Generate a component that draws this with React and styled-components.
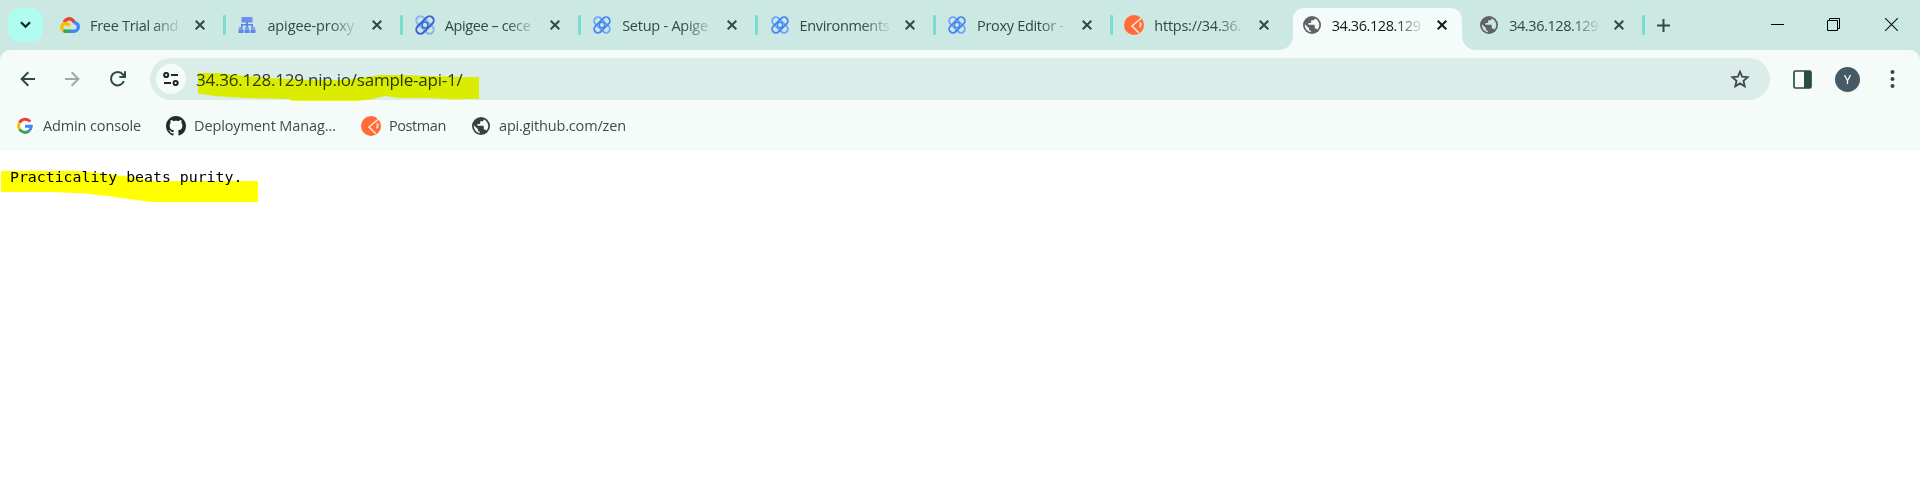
import React from "react";
import styled, { createGlobalStyle } from "styled-components";

const Global = createGlobalStyle`
  * { box-sizing: border-box; }
  body { margin: 0; background: #fff; font-family: "Open Sans", "Noto Sans", sans-serif; }
`;

const Window = styled.div`
  height: 494px;
  overflow: hidden;
  background: #fff;
`;

const TabStrip = styled.header`
  display: flex;
  height: 50px;
  padding-left: 8px;
  background: #cce8e2;
`;

const SearchTabs = styled.div`
  display: flex;
  align-items: center;
  justify-content: center;
  width: 35px;
  height: 34px;
  margin: 8px 4px 0 0;
  border-radius: 12px;
  background: #affcf0;
`;

const Tab = styled.div`
  position: relative;
  display: flex;
  align-items: center;
  flex: none;
  width: 177.4px;
  height: 50px;
  padding-left: 13px;
  color: ${(p) => (p.$active ? "#111b19" : "#2e4a45")};
`;

const ActiveShape = styled.svg`
  position: absolute;
  left: -11px;
  top: 0;
`;

const IconSlot = styled.span`
  position: relative;
  display: flex;
  align-items: center;
  justify-content: center;
  flex: none;
  width: 20px;
  height: 20px;
`;

const TabTitle = styled.span`
  position: relative;
  flex: none;
  width: 91px;
  margin-left: 10px;
  padding-top: 1px;
  overflow: hidden;
  white-space: nowrap;
  font-size: 14.5px;
  line-height: 24px;
  letter-spacing: ${(p) => p.$track}px;
  mask-image: linear-gradient(to right, #000 62px, transparent 93px);
`;

const CloseSlot = styled.span`
  position: relative;
  display: flex;
  flex: none;
  margin-left: 14px;
`;

const Divider = styled.span`
  flex: none;
  width: 3px;
  height: 20px;
  margin: 0 -3px 0 18px;
  border-radius: 1px;
  background: ${(p) => (p.$hidden ? "transparent" : "#7addd0")};
`;

const NewTab = styled.div`
  display: flex;
  align-items: center;
  margin-left: 13px;
`;

const WindowControls = styled.div`
  display: flex;
  align-items: center;
  gap: 43px;
  height: 49px;
  margin-left: auto;
  padding-right: 22px;
`;

const CloseWindow = styled.svg`
  margin-left: 2px;
`;

const Chrome = styled.div`
  background: #cce8e2;
`;

const Panel = styled.div`
  height: 101px;
  padding-top: 8px;
  border-radius: 10px 10px 0 0;
  background: #f5fbf9;
`;

const Toolbar = styled.div`
  display: flex;
  align-items: center;
  height: 42px;
  padding: 0 15px 0 18px;
`;

const NavIcons = styled.div`
  display: flex;
  flex: none;
  gap: 25px;
  width: 132px;
`;

const Omnibox = styled.div`
  position: relative;
  display: flex;
  align-items: center;
  flex: none;
  width: 1620px;
  height: 42px;
  padding: 0 20px 0 6px;
  border-radius: 21px;
  background: #daede8;
`;

const SiteInfo = styled.div`
  display: flex;
  align-items: center;
  justify-content: center;
  width: 30px;
  height: 30px;
  border-radius: 50%;
  background: #f5fbf9;
`;

const Url = styled.span`
  margin: 0 auto 0 10px;
  padding-top: 1px;
  font-size: 17px;
  line-height: 26px;
  letter-spacing: -0.22px;
  color: #2c3936;
  white-space: nowrap;
`;

const UrlMarker = styled.svg`
  position: absolute;
  left: 48px;
  top: 15px;
  mix-blend-mode: multiply;
`;

const Actions = styled.div`
  display: flex;
  align-items: center;
  flex: none;
  margin-left: 20px;
`;

const Avatar = styled.span`
  width: 25px;
  height: 25px;
  margin: 0 20px;
  border-radius: 50%;
  background: #455a64;
  color: #fff;
  font: 12.5px/25px Roboto, sans-serif;
  text-align: center;
`;

const Bookmarks = styled.nav`
  display: flex;
  align-items: center;
  height: 51px;
  padding-left: 15px;
`;

const Bookmark = styled.div`
  display: flex;
  align-items: center;
  gap: 8px;
  width: ${(p) => p.$width}px;
  font-size: 14.5px;
  line-height: 24px;
  letter-spacing: ${(p) => p.$track}px;
  color: #414c49;
  white-space: nowrap;
`;

const Page = styled.main`
  position: relative;
  padding: 15px 10px;
`;

const Response = styled.pre`
  margin: 0;
  font: 14.85px/22px "DejaVu Sans Mono", monospace;
  color: #000;
`;

const PageMarker = styled.svg`
  position: absolute;
  left: 1px;
  top: 20px;
  mix-blend-mode: multiply;
`;

const CloudIcon = () => (
  <svg width="20" height="16" viewBox="0 0 20 16" fill="none" strokeWidth="3.4">
    <path d="M4.2 5.2C5.5 2 9.2.8 12 2.6c1.3.8 2 1.8 2.3 3.2" stroke="#ea4335" />
    <path d="M13.8 5.6c3.1.3 4.5 2.3 4.5 4.3 0 2.4-1.7 4.300-4.200 4.300H10" stroke="#4285f4" />
    <path d="M10.300 14.200H6c-1 0-1.700-.2-2.500-.7" stroke="#34a853" />
    <path d="M3.400 13.400C.8 11.500 1.300 6.700 5.600 6.500c1.800 0 2.800.8 3.800 2.300" stroke="#fbbc04" />
  </svg>
);

const ProxyIcon = () => (
  <svg width="18" height="17" viewBox="0 0 18 17">
    <path d="M3.500 0h11v5.500h-11z" fill="#6c8fee" />
    <path d="M8 5h2v7H8zM3 7h12v1.600H3zM3 8h1.600v4H3zM13.400 8H15v4h-1.600z" fill="#5c84e8" />
    <path d="M1 10h4v2.500H1zM7 10h4v2.500H7zM13 10h4v2.500h-4z" fill="#7d9cf2" />
    <path d="M.5 12.500h5V16h-5zM6.500 12.500h5V16h-5zM12.500 12.500h5V16h-5z" fill="#5f86ea" />
  </svg>
);

const ApigeeIcon = ({ size = 18, dark = "#4285f4", light = "#6ea4f5" }) => (
  <svg width={size} height={size} viewBox="0 0 20 20" fill="none" strokeWidth="2">
    <rect x="-.6" y="5.800" width="21.200" height="8.400" rx="4.200" transform="rotate(45 10 10)" stroke={light} />
    <rect x="-.6" y="5.800" width="21.200" height="8.400" rx="4.200" transform="rotate(-45 10 10)" stroke={dark} />
    <circle cx="10" cy="10" r="3" stroke={dark} strokeWidth="1.600" />
  </svg>
);

const PostmanIcon = () => (
  <svg width="20" height="20" viewBox="0 0 20 20" fill="none">
    <circle cx="10" cy="10" r="10" fill="#ff6c37" />
    <path d="M17.200 3.200 8 11l6.800 6.800" stroke="#ffe9e0" strokeWidth="1.500" />
    <path d="M16.200 7.200c1.600 1.500 1.400 3.800-.4 5.200z" stroke="#ffe9e0" strokeWidth="1" />
  </svg>
);

const GlobeIcon = ({ color = "#5f6368", bg = "#cce8e2" }) => (
  <svg width="18" height="18" viewBox="0 0 18 18">
    <circle cx="9" cy="9" r="9" fill={color} />
    <path
      d="M1.900 8.200 6 12.200v.7c0 1.100.8 1.900 1.900 1.900v1.400A7.200 7.200 0 0 1 1.900 8.200zM11.800 2.400A7.200 7.200 0 0 1 14.400 13.800c-.3-.8-1-1.300-1.800-1.300h-.8V9.800c0-.6-.4-1-1-1H5.400V7h1.800c.6 0 1-.4 1-1V4.300h1.700c1.100 0 1.900-.8 1.900-1.900z"
      fill={bg}
    />
  </svg>
);

const GoogleIcon = () => (
  <svg width="20" height="20" viewBox="0 0 20 20" fill="none" strokeWidth="3">
    <circle cx="10" cy="10" r="10" fill="#fff" />
    <path d="M15.200 5.600A6.400 6.400 0 0 0 4.500 6.700" stroke="#ea4335" />
    <path d="M4.500 6.700a6.400 6.400 0 0 0 0 6.600" stroke="#fbbc04" />
    <path d="M4.500 13.300a6.400 6.400 0 0 0 9.600 1.600" stroke="#34a853" />
    <path d="M14.100 14.900c1.500-1.200 2.200-2.700 2.200-4.600H10" stroke="#4285f4" />
  </svg>
);

const GithubIcon = () => (
  <svg width="20" height="20" viewBox="0 0 16 16" fill="#24292f">
    <path d="M8 0C3.580 0 0 3.580 0 8c0 3.540 2.290 6.530 5.470 7.590.4.070.55-.17.55-.38 0-.19-.01-.82-.01-1.490-2.010.37-2.530-.49-2.690-.94-.09-.23-.48-.94-.82-1.130-.28-.15-.68-.52-.01-.53.63-.01 1.080.58 1.230.82.72 1.210 1.870.87 2.330.66.07-.52.28-.87.51-1.070-1.780-.2-3.640-.89-3.640-3.950 0-.87.31-1.590.82-2.150-.08-.2-.36-1.020.08-2.120 0 0 .67-.21 2.200.82.64-.18 1.320-.27 2-.27s1.360.09 2 .27c1.530-1.040 2.200-.82 2.200-.82.44 1.100.16 1.920.08 2.120.51.56.82 1.270.82 2.150 0 3.070-1.870 3.750-3.650 3.950.29.25.54.73.54 1.480 0 1.070-.01 1.930-.01 2.200 0 .21.15.46.55.38A8.010 8.010 0 0 0 16 8c0-4.420-3.580-8-8-8z" />
  </svg>
);

const CloseIcon = () => (
  <svg width="10" height="10" viewBox="0 0 10 10" stroke="currentColor" strokeWidth="2">
    <path d="M.7.7l8.600 8.600M9.300.7L.7 9.300" />
  </svg>
);

const tabs = [
  { title: "Free Trial and", track: -0.3, icon: <CloudIcon /> },
  { title: "apigee-proxy", track: -0.1, icon: <ProxyIcon /> },
  { title: "Apigee – cece", track: -0.4, icon: <ApigeeIcon size={20} dark="#3367d6" light="#8fb0ee" /> },
  { title: "Setup - Apige", track: -0.25, icon: <ApigeeIcon /> },
  { title: "Environments", track: -0.35, icon: <ApigeeIcon /> },
  { title: "Proxy Editor -", track: -0.3, icon: <ApigeeIcon /> },
  { title: "https://34.36.", track: -0.25, icon: <PostmanIcon />, noDivider: true },
  { title: "34.36.128.129", track: -0.42, icon: <GlobeIcon bg="#f5fbf9" />, active: true, noDivider: true },
  { title: "34.36.128.129", track: -0.42, icon: <GlobeIcon /> },
];

const bookmarks = [
  { label: "Admin console", width: 151, track: -0.13, icon: <GoogleIcon /> },
  { label: "Deployment Manag...", width: 195, track: -0.11, icon: <GithubIcon /> },
  { label: "Postman", width: 110, track: -0.42, icon: <PostmanIcon /> },
  { label: "api.github.com/zen", width: 170, track: -0.16, icon: <GlobeIcon color="#3c4043" bg="#f5fbf9" /> },
];

export default function App() {
  return (
    <Window>
      <Global />
      <TabStrip>
        <SearchTabs>
          <svg width="11" height="8" viewBox="0 0 11 8" fill="none" stroke="#12201d" strokeWidth="2.200">
            <path d="M1 1.200l4.500 4.500L10 1.200" />
          </svg>
        </SearchTabs>
        {tabs.map((t, i) => (
          <Tab key={i} $active={t.active}>
            {t.active && (
              <ActiveShape width="201" height="50" viewBox="0 0 201 50" fill="#f5fbf9">
                <path d="M0 50c9 0 15-6 15-15V20C15 12 20 8 27 8h145c7 0 12 4 12 12v15c0 9 6 15 15 15z" />
              </ActiveShape>
            )}
            <IconSlot>{t.icon}</IconSlot>
            <TabTitle $track={t.track}>{t.title}</TabTitle>
            <CloseSlot>
              <CloseIcon />
            </CloseSlot>
            <Divider $hidden={t.noDivider} />
          </Tab>
        ))}
        <NewTab>
          <svg width="13" height="13" viewBox="0 0 13 13" stroke="#2e4a45" strokeWidth="2">
            <path d="M6.500 0v13M0 6.500h13" />
          </svg>
        </NewTab>
        <WindowControls>
          <svg width="13" height="13" viewBox="0 0 13 13" stroke="#000">
            <path d="M0 6.500h13" />
          </svg>
          <svg width="13" height="13" viewBox="0 0 13 13" fill="none" stroke="#000">
            <path d="M.5 2.500h10v10H.5zM2.500 2V.5h10v10H11" />
          </svg>
          <CloseWindow width="13" height="13" viewBox="0 0 13 13" stroke="#111" strokeWidth="1.100">
            <path d="M0 0l13 13M13 0L0 13" />
          </CloseWindow>
        </WindowControls>
      </TabStrip>
      <Chrome>
        <Panel>
          <Toolbar>
            <NavIcons>
              <svg width="20" height="20" viewBox="0 0 20 20" fill="none" stroke="#2e4a45" strokeWidth="2">
                <path d="M17 10H4M10.300 3.300L3.600 10l6.700 6.700" />
              </svg>
              <svg width="20" height="20" viewBox="0 0 20 20" fill="none" stroke="#a0a8a6" strokeWidth="2">
                <path d="M2 10h13M8.700 3.300l6.700 6.700-6.700 6.700" />
              </svg>
              <svg width="20" height="20" viewBox="0 0 20 20" fill="none" stroke="#2e4a45" strokeWidth="2">
                <path d="M15.900 12.200A6.700 6.700 0 1 1 14.900 5.500l1.500 1.800M17 2.200V8h-5.700" />
              </svg>
            </NavIcons>
            <Omnibox>
              <SiteInfo>
                <svg width="16" height="14" viewBox="0 0 16 14" fill="none" stroke="#1c2a27" strokeWidth="2">
                  <circle cx="3.200" cy="3" r="2.100" />
                  <path d="M8 3h7M1 11h7" />
                  <circle cx="12.600" cy="11" r="2.100" />
                </svg>
              </SiteInfo>
              <Url>34.36.128.129.nip.io/sample-api-1/</Url>
              <UrlMarker width="281" height="28" viewBox="0 0 281 28" fill="#ff0">
                <path d="M0 0h20l27 3 25 2 40 2h35l15-2 20-3h20l30 1 35 1h14v22h-14l-10 .5-25-1.500h-30l-15-2-15 3.500-13 1.500H95l-5-2-43-1-30-2-17-2.500z" />
              </UrlMarker>
              <svg width="20" height="20" viewBox="0 0 20 20" fill="none" stroke="#414a48" strokeWidth="1.800">
                <path d="M10 2.700l2.100 5 5.600.5-4.200 3.700 1.200 5.400-4.700-2.900-4.700 2.900 1.200-5.400L2.300 8.200l5.600-.5z" />
              </svg>
            </Omnibox>
            <Actions>
              <svg width="25" height="19" viewBox="0 0 25 19">
                <rect x="4" y="1" width="17" height="17" rx="1.500" fill="none" stroke="#2e4a45" strokeWidth="1.700" />
                <path d="M14 1h7v17h-7z" fill="#2e4a45" />
              </svg>
              <Avatar>Y</Avatar>
              <svg width="25" height="20" viewBox="0 0 25 20" fill="#2e4a45">
                <circle cx="12.500" cy="3" r="2" />
                <circle cx="12.500" cy="10" r="2" />
                <circle cx="12.500" cy="17" r="2" />
              </svg>
            </Actions>
          </Toolbar>
          <Bookmarks>
            {bookmarks.map((b) => (
              <Bookmark key={b.label} $width={b.width} $track={b.track}>
                <IconSlot>{b.icon}</IconSlot>
                {b.label}
              </Bookmark>
            ))}
          </Bookmarks>
        </Panel>
      </Chrome>
      <Page>
        <Response>Practicality beats purity.</Response>
        <PageMarker width="257" height="31" viewBox="0 0 257 31" fill="#ff0">
          <path d="M0 0h77l20 2 26 3 20 3 10 2h104v21H150L128 28l-22-3-22-2.500-33-1.500H0z" />
        </PageMarker>
      </Page>
    </Window>
  );
}
